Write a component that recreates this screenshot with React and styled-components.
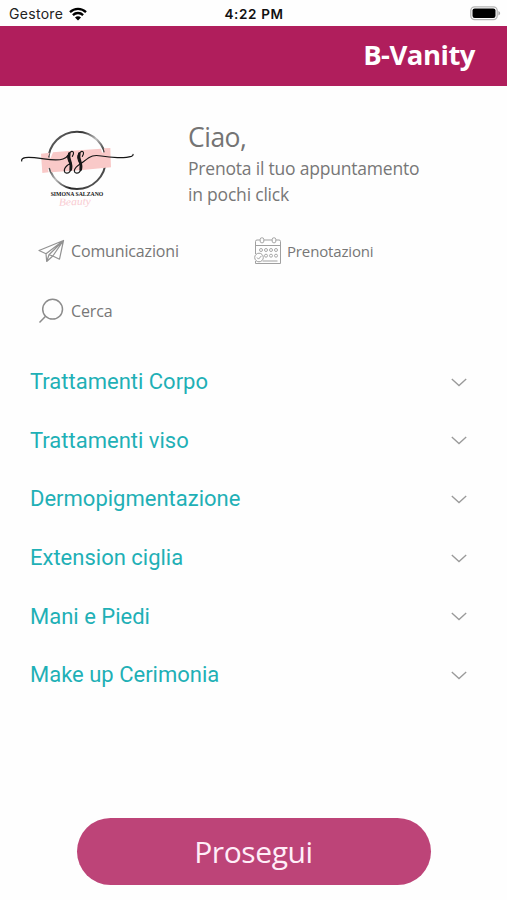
import React from "react";
import styled, { createGlobalStyle } from "styled-components";

const GlobalStyle = createGlobalStyle`
    * {
        box-sizing: border-box;
    }

    body {
        margin: 0;
        background: #fefefe;
        font-family: "Open Sans", "Noto Sans", sans-serif;
        color: #777;
    }
`

const Screen = styled.div`
    display: flex;
    flex-direction: column;
    width: 507px;
    height: 900px;
    overflow: hidden;
`

const StatusBar = styled.div`
    display: grid;
    grid-template-columns: 1fr auto 1fr;
    align-items: center;
    height: 26px;
    padding: 1px 6px 0 9px;
    font: 500 13.5px/24px Inter, sans-serif;
    color: #222;
`

const Carrier = styled.div`
    display: flex;
    align-items: center;
    gap: 6px;
    font-weight: 400;
    font-size: 14px;
    letter-spacing: 0.3px;
`

const Clock = styled.div`
    margin-right: 2px;
    font-weight: 600;
    font-size: 13.5px;
    letter-spacing: 0.65px;
    color: #111;
`

const BatteryIcon = styled.svg`
    justify-self: end;
`

const Header = styled.header`
    display: flex;
    align-items: center;
    justify-content: flex-end;
    height: 60px;
    padding: 0 32px 2px 0;
    background: #b01e5c;
`

const Brand = styled.h1`
    margin: 0;
    font-size: 27.5px;
    line-height: 40px;
    font-weight: 700;
    letter-spacing: -0.5px;
    color: #fff;
`

const Welcome = styled.section`
    display: flex;
    height: 135px;
    padding: 29px 0 0 10px;
`

const Greeting = styled.div`
    padding: 4px 0 0 38px;
`

const Hello = styled.div`
    font-size: 26.5px;
    line-height: 36px;
    letter-spacing: -0.5px;
    color: #747474;
`

const Subtitle = styled.p`
    margin: 0;
    font-size: 17.5px;
    line-height: 26px;
    letter-spacing: -0.2px;
`

const Shortcuts = styled.nav`
    display: grid;
    grid-template-columns: 216px 1fr;
    grid-auto-rows: 60px;
    padding-left: 38px;
    height: 132px;
`

const Shortcut = styled.a`
    display: flex;
    align-items: center;
    gap: ${props => props.$gap || 6}px;
    font-size: ${props => props.$size || 16}px;
    line-height: 22px;
    letter-spacing: -0.15px;
`

const CategoryList = styled.ul`
    list-style: none;
    margin: 0;
    padding: 0 40px 0 30px;
    flex: 1;
`

const Category = styled.li`
    display: flex;
    align-items: center;
    justify-content: space-between;
    height: 58.6px;
    font: 400 22px/30px Roboto, sans-serif;
    color: #1fb0b6;
`

const Footer = styled.footer`
    display: flex;
    justify-content: center;
    padding-bottom: 15px;
`

const Proceed = styled.button`
    width: 354px;
    height: 67px;
    padding: 0;
    border: 0;
    border-radius: 34px;
    background: #bd4478;
    font: 400 30px/40px "Open Sans", sans-serif;
    letter-spacing: -0.4px;
    color: #ffeef8;
`

const categories = [
  "Trattamenti Corpo",
  "Trattamenti viso",
  "Dermopigmentazione",
  "Extension ciglia",
  "Mani e Piedi",
  "Make up Cerimonia",
];

const Wifi = () => (
  <svg width="18" height="14" viewBox="0 0 18 14" fill="none" stroke="#000" strokeWidth="2.3">
    <path d="M1 5.1C5.5.7 12.5.7 17 5.1" />
    <path d="M3.9 8.1c2.9-2.8 7.3-2.8 10.2 0" />
    <path d="M6 10.4c1.7-1.5 4.3-1.5 6 0L9 13.5z" fill="#000" stroke="none" />
  </svg>
);

const Battery = () => (
  <BatteryIcon width="31" height="15" viewBox="0 0 31 15">
    <rect x=".8" y=".8" width="26.4" height="12.8" rx="3.8" fill="#fff" stroke="#b5b5b5" strokeWidth="1.3" />
    <rect x="2.5" y="2.4" width="23" height="9.6" rx="2.2" fill="#000" />
    <path d="M28.4 5v4.5c2.3-.8 2.3-3.7 0-4.5z" fill="#aaa" />
  </BatteryIcon>
);

// round monogram with the brush stroke and the salon name under it
const Logo = () => (
  <svg width="140" height="105" viewBox="0 0 420 315" fill="none">
    <defs>
      <linearGradient id="ring" x1="0" y1="0" x2="1" y2="1">
        <stop offset="0" stopColor="#777" />
        <stop offset=".3" stopColor="#333" />
        <stop offset=".48" stopColor="#bbb" />
        <stop offset=".68" stopColor="#222" />
        <stop offset="1" stopColor="#777" />
      </linearGradient>
    </defs>
    <circle cx="201" cy="136" r="86" stroke="url(#ring)" strokeWidth="6" />
    <path d="M93 116l26-3-5 14 8 2 7-17 56-5 88-6 3 12 8-1-3-12 20-1 2 58-93 9-86 6-4-14-7 3 3 11-19 2z" fill="#f9c9c8" />
    <g stroke="#161616" strokeLinecap="round">
      <path d="M35 138c-2-12 18-12 38-10 38 4 64 12 86 4 8-3 12-6 15-11" strokeWidth="3.6" />
      <path d="M187 124c7-10 3-17-4-14-9 5-13 17-7 28 6 10 10 21 4 31-5 8-16 7-17-1-1-10 9-18 20-24" strokeWidth="3.6" />
      <path d="M178 116c-6 16 10 26 4 48" strokeWidth="8" />
      <path d="M217 124c7-10 3-17-4-14-9 5-13 17-7 28 6 10 10 21 4 31-5 8-16 7-17-1-1-13 17-20 29-29 21-17 30-20 52-16 28 5 71 7 90 1 5-2 6-5 5-6" strokeWidth="3.6" />
      <path d="M208 116c-6 16 10 26 4 48" strokeWidth="8" />
    </g>
    <text x="147" y="272" fontSize="32" fill="#f9ccd2" fontFamily="Liberation Serif, serif" fontStyle="italic" textLength="96" lengthAdjust="spacingAndGlyphs" transform="rotate(-2 147 272)">Beauty</text>
    <text x="122" y="244" fontSize="19" fill="#151515" fontFamily="Liberation Serif, serif" fontWeight="700" textLength="158" lengthAdjust="spacingAndGlyphs">SIMONA SALZANO</text>
  </svg>
);

const PlaneIcon = () => (
  <svg width="27" height="24" viewBox="0 0 27 24" fill="none" stroke="#929292" strokeWidth="1.2" strokeLinejoin="round">
    <path d="M25.5 1.5L1 11.5l7 3.2 17.5-13.2-4 18.7-6.7-3.2L25.5 1.5 11 15.8l-2.3 6.7-.7-7.8M11 15.8l3.8 1.2-6.1 5.5" />
  </svg>
);

const CalendarIcon = () => (
  <svg width="28" height="28" viewBox="0 0 28 28" fill="none" stroke="#a0a0a0" strokeWidth="1">
    <path d="M1.5 17V4.5Q1.5 3 3 3h3M10 3h8M22 3h3q1.5 0 1.5 1.5v22H1.5V24M1.5 8.5h25M8.5 24h15" />
    <rect x="6.2" y=".8" width="3.6" height="5" rx="1.6" />
    <rect x="18.2" y=".8" width="3.6" height="5" rx="1.6" />
    <g strokeWidth=".9">
      {[7, 12, 17, 22].map(x => <circle key={x} cx={x} cy="13" r="1.5" />)}
      {[12, 17, 22].map(x => <circle key={x} cx={x} cy="18.7" r="1.5" />)}
    </g>
    <circle cx="5" cy="20.5" r="4.3" fill="#fefefe" />
    <path d="M3 20.5l1.5 1.6 3-3.3" />
  </svg>
);

const SearchIcon = () => (
  <svg width="27" height="26" viewBox="0 0 27 26" fill="none" stroke="#8c8c8c" strokeWidth="1.5">
    <circle cx="14.6" cy="11.2" r="9.9" />
    <path d="M7.6 18.2L1.5 24.5" />
  </svg>
);

const Chevron = () => (
  <svg width="16" height="9" viewBox="0 0 16 9" fill="none" stroke="#9a9a9a" strokeWidth="1.3">
    <path d="M.8 1l7.2 6.6L15.2 1" />
  </svg>
);

const App = () => {
  return (
    <>
      <GlobalStyle />
      <Screen>
        <StatusBar>
          <Carrier>Gestore <Wifi /></Carrier>
          <Clock>4:22 PM</Clock>
          <Battery />
        </StatusBar>
        <Header>
          <Brand>B-Vanity</Brand>
        </Header>
        <Welcome>
          <Logo />
          <Greeting>
            <Hello>Ciao,</Hello>
            <Subtitle>Prenota il tuo appuntamento<br />in pochi click</Subtitle>
          </Greeting>
        </Welcome>
        <Shortcuts>
          <Shortcut><PlaneIcon />Comunicazioni</Shortcut>
          <Shortcut $size={15} $gap={5}><CalendarIcon />Prenotazioni</Shortcut>
          <Shortcut><SearchIcon />Cerca</Shortcut>
        </Shortcuts>
        <CategoryList>
          {categories.map(name => (
            <Category key={name}>{name}<Chevron /></Category>
          ))}
        </CategoryList>
        <Footer>
          <Proceed>Prosegui</Proceed>
        </Footer>
      </Screen>
    </>
  );
};

export default App;
